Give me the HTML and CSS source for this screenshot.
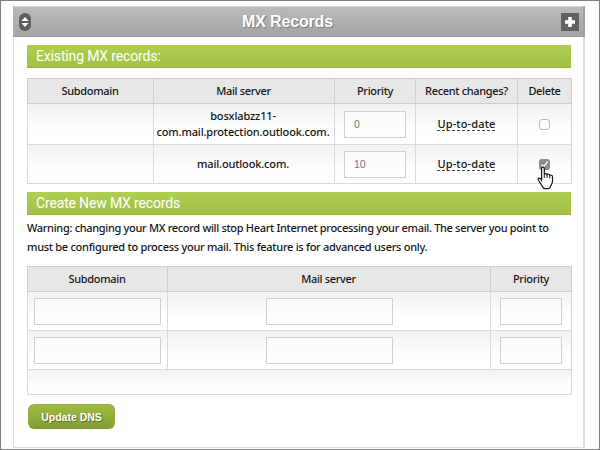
FILE: index.html
```
<!DOCTYPE html>
<html lang="en">
<head>
<meta charset="utf-8">
<title>MX Records</title>
<link rel="stylesheet" href="styles.css">
</head>
<body>
<main class="panel">
  <header class="panel-head">
    <svg class="sorter" width="12" height="18" viewBox="0 0 12 18"><rect width="12" height="18" rx="6" fill="#5d5d5d"/><path d="M2.3 8 6 4l3.7 4zM2.3 10h7.4L6 14z" fill="#fff"/></svg>
    <h1>MX Records</h1>
    <svg class="plus" width="18" height="18" viewBox="0 0 18 18"><rect width="18" height="18" fill="#616161"/><path d="M9 4v10M4 9h10" stroke="#fff" stroke-width="3.6"/></svg>
  </header>
  <div class="content">
    <h2>Existing MX records:</h2>
    <table class="existing">
      <colgroup><col class="e1"><col class="e2"><col class="e3"><col class="e4"><col class="e5"></colgroup>
      <tr class="head"><th>Subdomain</th><th>Mail server</th><th>Priority</th><th>Recent changes?</th><th>Delete</th></tr>
      <tr class="tall"><td></td><td class="host"><span>bosxlabzz11-</span><br>com.mail.protection.outlook.com.</td><td><input class="prio" value="0"></td><td><span class="status">Up-to-date</span></td><td><span class="check"></span></td></tr>
      <tr><td></td><td class="host">mail.outlook.com.</td><td><input class="prio" value="10"></td><td><span class="status">Up-to-date</span></td><td><span class="check on"><svg width="11" height="11" viewBox="0 0 11 11"><path d="M2.5 5.5 4.7 8 8.5 2.7" fill="none" stroke="#fff" stroke-width="1.4"/></svg><svg class="cursor" width="18" height="24" viewBox="0 0 18 24"><path d="M4.6 2.6c0-2 2.7-2 2.7 0v5.6c.5-1 2.5-.9 2.8.5.7-.9 2.5-.6 2.7.7.9-.7 2.7-.2 2.7 1.2v4.6c0 2.6-1.7 3.6-2 5.3-.3 1.5-1 2.2-3.1 2.2H8.300c-2 0-2.500-1-3.100-2.500-.8-2-2.700-4-3.900-6.500-.7-1.700 1.300-2.300 2.300-.8l1 1.400z" fill="#fff" stroke="#15151f" stroke-width="1.2"/><path d="M7.300 8v4M10.100 8.800V12M12.800 9.500V12.500" stroke="#15151f" stroke-width="1"/></svg></span></td></tr>
    </table>
    <h2 class="second">Create New MX records</h2>
    <p><span class="l1">Warning: changing your MX record will stop Heart Internet processing your email. The server you point to</span><br><span class="l2">must be configured to process your mail. This feature is for advanced users only.</span></p>
    <table class="create">
      <colgroup><col class="c1"><col class="c2"><col class="c3"></colgroup>
      <tr class="head"><th>Subdomain</th><th>Mail server</th><th>Priority</th></tr>
      <tr><td><input class="wide"></td><td><input class="wide"></td><td><input class="prio"></td></tr>
      <tr><td><input class="wide"></td><td><input class="wide"></td><td><input class="prio"></td></tr>
      <tr class="foot"><td colspan="3"></td></tr>
    </table>
    <button>Update DNS</button>
  </div>
</main>
</body>
</html>
```
FILE: styles.css
```
* { box-sizing: border-box; }
body {
  margin: 0;
  width: 600px;
  height: 450px;
  overflow: hidden;
  border: 1px solid #808080;
  padding: 5px 14px 0 12px;
  background: #fff;
  color: #161616;
  font: 500 11px/18px "Noto Sans", "Open Sans", sans-serif;
  letter-spacing: -.25px;
}
.panel {
  height: 442px;
  border: 1px solid #dedede;
  border-right-width: 2px;
}
.panel-head {
  display: flex;
  align-items: center;
  height: 31px;
  margin: -1px -2px 0 -1px;
  padding: 1px 4px 0 5px;
  background: linear-gradient(#bbb, #a4a4a4);
  border: 1px solid #b0b0b0;
  border-top-color: #d6d6d6;
  border-right: 2px solid #a0a0a0;
  border-bottom-color: #999;
}
.sorter, .plus { display: block; margin-top: -1px; }
h1 {
  flex: 1;
  margin: 0;
  padding-right: 17px;
  text-align: center;
  color: #fff;
  font: bold 16px/20px "Liberation Sans", sans-serif;
  letter-spacing: -.15px;
  text-shadow: 1px 1px 1px #777;
}
.content { padding: 8px 12px 0 13px; }
h2 {
  height: 23px;
  margin: 0;
  padding-left: 9px;
  color: #fff;
  background: linear-gradient(#afcf50, #a3c144);
  border-bottom: 1px solid #96b42f;
  font: 400 14px/23px Roboto, sans-serif;
  letter-spacing: -.16px;
}
table {
  width: 545px;
  border-collapse: collapse;
  table-layout: fixed;
}
.existing { margin-top: 10px; }
.e1 { width: 126px; }
.e2 { width: 181px; }
.e3 { width: 81px; }
.e4 { width: 102px; }
.e5 { width: 54px; }
.c1 { width: 140px; }
.c2 { width: 323px; }
.c3 { width: 81px; }
th, td {
  border: 1px solid #dadada;
  padding: 0;
  text-align: center;
  vertical-align: middle;
}
th {
  padding-bottom: 1px;
  background: #e7e7e7;
  border-color: #cfcfcf;
  font-weight: 500;
  letter-spacing: -.33px;
}
th:nth-child(-n+2) { padding-right: 1px; }
tr { height: 39px; background: linear-gradient(#f1f1f1, #fff 65%); }
tr.head { height: 25px; }
tr.tall { height: 41px; }
tr.foot { height: 25px; }
td.host {
  padding-right: 2px;
  line-height: 16px;
  white-space: nowrap;
  letter-spacing: -.15px;
}
input {
  display: block;
  height: 27px;
  margin: 0 auto;
  padding: 0 9px;
  border: 1px solid #d0d0d0;
  background: linear-gradient(#fafafa, #fff);
  color: #777;
  font: 10.500px "Liberation Sans", sans-serif;
}
.prio { width: 62px; }
.wide { width: 127px; }
.status {
  display: inline-block;
  height: 15px;
  line-height: 15px;
  letter-spacing: .15px;
  background: repeating-linear-gradient(90deg, #444 0 3px, transparent 3px 5px) bottom / 100% 1px no-repeat;
}
.check {
  display: block;
  position: relative;
  width: 11px;
  height: 11px;
  margin: 0 auto;
  border: 1px solid #bbb;
  border-radius: 3px;
  background: #fff;
}
.check.on { border: 0; background: #8c8c8c; }
.check svg { display: block; }
.check .cursor { position: absolute; left: -2px; top: 7px; }
.second { margin-top: 8px; }
p { margin: 3px 0 10px; line-height: 19px; white-space: nowrap; }
.l1 { letter-spacing: -.32px; }
.l2 { letter-spacing: -.28px; }
button {
  display: block;
  width: 87px;
  height: 25px;
  margin: 9px 0 0 1px;
  padding: 0;
  border: 1px solid #93b13e;
  border-bottom-color: #7c9830;
  border-radius: 6px;
  background: linear-gradient(#9fbb43, #829e35);
  color: #fff;
  font: bold 10.500px "Liberation Sans", sans-serif;
  text-shadow: 1px 1px 1px #576b20;
}
```
